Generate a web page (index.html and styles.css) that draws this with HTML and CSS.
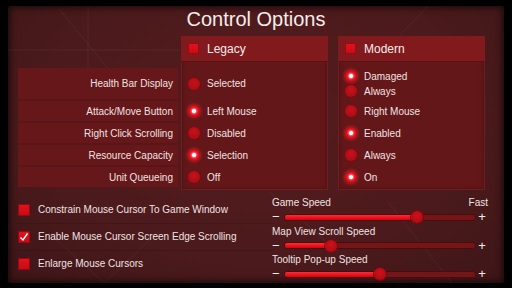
FILE: index.html
```html
<!DOCTYPE html>
<html lang="en">
<head>
    <meta charset="UTF-8">
    <title>Control Options</title>
    <link rel="stylesheet" href="styles.css">
</head>
<body>

<div class="panel">
    <!-- faint background scratches -->
    <svg class="deco" width="496" height="277" viewBox="0 0 496 277">
        <path d="M80 0 V62 M0 44 H172 M52 4 L124 92 M378 44 L420 0 M330 44 H345 M40 226 L96 277 M96 277 L150 226 M262 186 L330 246 M380 196 L444 277" stroke="#ffffff" stroke-opacity="0.05" fill="none"/>
    </svg>

    <h1 class="title">Control Options</h1>

    <div class="options">
        <div class="label-bg"></div>
        <div class="col-bg legacy-col"></div>
        <div class="col-bg modern-col"></div>

        <div class="head legacy-col"><span class="box"></span>Legacy</div>
        <div class="head modern-col"><span class="box"></span>Modern</div>

        <div class="label row-1">Health Bar Display</div>
        <div class="cell legacy-col row-1"><span class="radio"></span>Selected</div>
        <div class="cell modern-col row-1 stack">
            <div class="opt"><span class="radio on"></span>Damaged</div>
            <div class="opt"><span class="radio"></span>Always</div>
        </div>

        <div class="label row-2">Attack/Move Button</div>
        <div class="cell legacy-col row-2"><span class="radio on"></span>Left Mouse</div>
        <div class="cell modern-col row-2"><span class="radio"></span>Right Mouse</div>

        <div class="label row-3">Right Click Scrolling</div>
        <div class="cell legacy-col row-3"><span class="radio"></span>Disabled</div>
        <div class="cell modern-col row-3"><span class="radio on"></span>Enabled</div>

        <div class="label row-4">Resource Capacity</div>
        <div class="cell legacy-col row-4"><span class="radio on"></span>Selection</div>
        <div class="cell modern-col row-4"><span class="radio"></span>Always</div>

        <div class="label row-5">Unit Queueing</div>
        <div class="cell legacy-col row-5"><span class="radio"></span>Off</div>
        <div class="cell modern-col row-5"><span class="radio on"></span>On</div>
    </div>

    <div class="bottom">
        <div class="checks">
            <div class="check-row"><span class="cb"></span>Constrain Mouse Cursor To Game Window</div>
            <div class="check-row">
                <span class="cb">
                    <svg width="12" height="12" viewBox="0 0 12 12"><path d="M2.5 6.5 L5 9 L9.5 2.5" stroke="#fff" stroke-width="1.4" fill="none"/></svg>
                </span>Enable Mouse Cursor Screen Edge Scrolling
            </div>
            <div class="check-row"><span class="cb"></span>Enlarge Mouse Cursors</div>
        </div>

        <div class="sliders">
            <div class="slider">
                <div class="slider-label"><span>Game Speed</span><span>Fast</span></div>
                <div class="slider-row">
                    <span class="minus">&minus;</span>
                    <div class="track"><div class="fill" style="width: 69.6%"></div><span class="knob" style="left: 69.6%"></span></div>
                    <span class="plus">+</span>
                </div>
            </div>
            <div class="slider">
                <div class="slider-label"><span>Map View Scroll Speed</span></div>
                <div class="slider-row">
                    <span class="minus">&minus;</span>
                    <div class="track"><div class="fill" style="width: 24%"></div><span class="knob" style="left: 24%"></span></div>
                    <span class="plus">+</span>
                </div>
            </div>
            <div class="slider">
                <div class="slider-label"><span>Tooltip Pop-up Speed</span></div>
                <div class="slider-row">
                    <span class="minus">&minus;</span>
                    <div class="track"><div class="fill" style="width: 50%"></div><span class="knob" style="left: 50%"></span></div>
                    <span class="plus">+</span>
                </div>
            </div>
        </div>
    </div>
</div>

</body>
</html>
```

FILE: styles.css
```css
body, html {
    margin: 0;
    padding: 0;
    width: 512px;
    height: 288px;
    overflow: hidden;
    background-color: #000;
    font-family: "Liberation Sans", Arial, sans-serif;
    color: #f0e2e2;
}
.panel {
    position: relative;
    z-index: 0;
    margin: 6px 8px 0 8px;
    height: 277px;
    padding: 0 10px;
    box-sizing: border-box;
    border-radius: 3px;
    background: radial-gradient(ellipse at 50% 40%, #561c1e 0%, #4b1a1c 60%, #3e1618 100%);
    box-shadow: inset 0 0 6px 2px rgba(0, 0, 0, 0.6);
}
.deco {
    position: absolute;
    left: 0;
    top: 0;
    z-index: -1;
}
.title {
    margin: 0 0 4px 0;
    height: 26px;
    line-height: 26px;
    font-size: 20px;
    font-weight: normal;
    text-align: center;
    color: #f6ecec;
}
.options {
    display: grid;
    grid-template-columns: 163px 147px 10px 147px;
    grid-template-rows: 26px 2px 31px 20px 20px 20px 20px 1px;
    row-gap: 2px;
    font-size: 10px;
}
.legacy-col {
    grid-column: 2;
}
.modern-col {
    grid-column: 4;
}
.label-bg {
    grid-column: 1;
    grid-row: 3 / 8;
    margin-right: 3px;
    background-color: #591618;
}
.col-bg {
    grid-row: 1 / 9;
    background-color: #631719;
    border: 1px solid #6f1d20;
    box-shadow: inset 0 0 4px rgba(0, 0, 0, 0.3);
}
.head {
    grid-row: 1;
    display: flex;
    align-items: center;
    padding-left: 7px;
    font-size: 12px;
    background-color: #801a1d;
    border-bottom: 1px solid #5a1315;
    color: #f6ecec;
}
.box {
    width: 11px;
    height: 11px;
    margin-right: 8px;
    background: linear-gradient(#e8121c, #c40b14);
    box-shadow: inset 0 0 0 1px #9a0a12;
}
.row-1 { grid-row: 3; }
.row-2 { grid-row: 4; }
.row-3 { grid-row: 5; }
.row-4 { grid-row: 6; }
.row-5 { grid-row: 7; }
.label {
    grid-column: 1;
    display: flex;
    align-items: center;
    justify-content: flex-end;
    margin-right: 3px;
    padding-right: 5px;
    background-color: #661719;
}
.cell {
    display: flex;
    align-items: center;
    padding-left: 7px;
}
.stack {
    flex-direction: column;
    align-items: flex-start;
    justify-content: center;
    gap: 3px;
}
.opt {
    display: flex;
    align-items: center;
    height: 12px;
}
.radio {
    flex: none;
    width: 12px;
    height: 12px;
    margin-right: 7px;
    border-radius: 50%;
    background: radial-gradient(circle at 50% 40%, #c8111b, #9e0c14);
    box-shadow: 0 0 0 1px #7c0c12;
}
.radio.on {
    background: radial-gradient(circle, #ffffff 0, #ffffff 1.6px, #ff5060 2.6px, #e8101c 4px, #c80c16 6px);
    box-shadow: 0 0 3px 1px rgba(255, 40, 50, 0.55);
}
.bottom {
    display: flex;
    margin-top: 6px;
    font-size: 10px;
}
.checks {
    width: 254px;
}
.check-row {
    display: flex;
    align-items: center;
    height: 27px;
}
.check-row + .check-row {
    box-shadow: inset 0 1px 0 rgba(0, 0, 0, 0.12);
}
.cb {
    flex: none;
    width: 12px;
    height: 12px;
    margin-right: 8px;
    background: linear-gradient(#e6121c, #c20b14);
    box-shadow: inset 0 0 0 1px #940a12;
}
.cb svg {
    display: block;
}
.sliders {
    width: 216px;
}
.slider {
    height: 28.5px;
}
.slider-label {
    display: flex;
    justify-content: space-between;
    height: 14px;
    line-height: 14px;
}
.slider-row {
    display: flex;
    align-items: center;
    height: 14px;
}
.minus, .plus {
    width: 12px;
    font-size: 13px;
    line-height: 14px;
    color: #f6ecec;
}
.plus {
    text-align: center;
}
.track {
    position: relative;
    flex: 1;
    height: 7px;
    box-sizing: border-box;
    border: 1px solid #4c0c0f;
    border-radius: 3px;
    background-color: #741518;
}
.fill {
    height: 100%;
    border-radius: 2px;
    background: linear-gradient(#ff2a36, #d4000c);
}
.knob {
    position: absolute;
    top: 50%;
    width: 12px;
    height: 12px;
    margin: -6px 0 0 -6px;
    border-radius: 50%;
    background: radial-gradient(circle at 50% 40%, #d0101a, #a20a12);
    box-shadow: 0 0 0 1px #7a0a10;
}
```
